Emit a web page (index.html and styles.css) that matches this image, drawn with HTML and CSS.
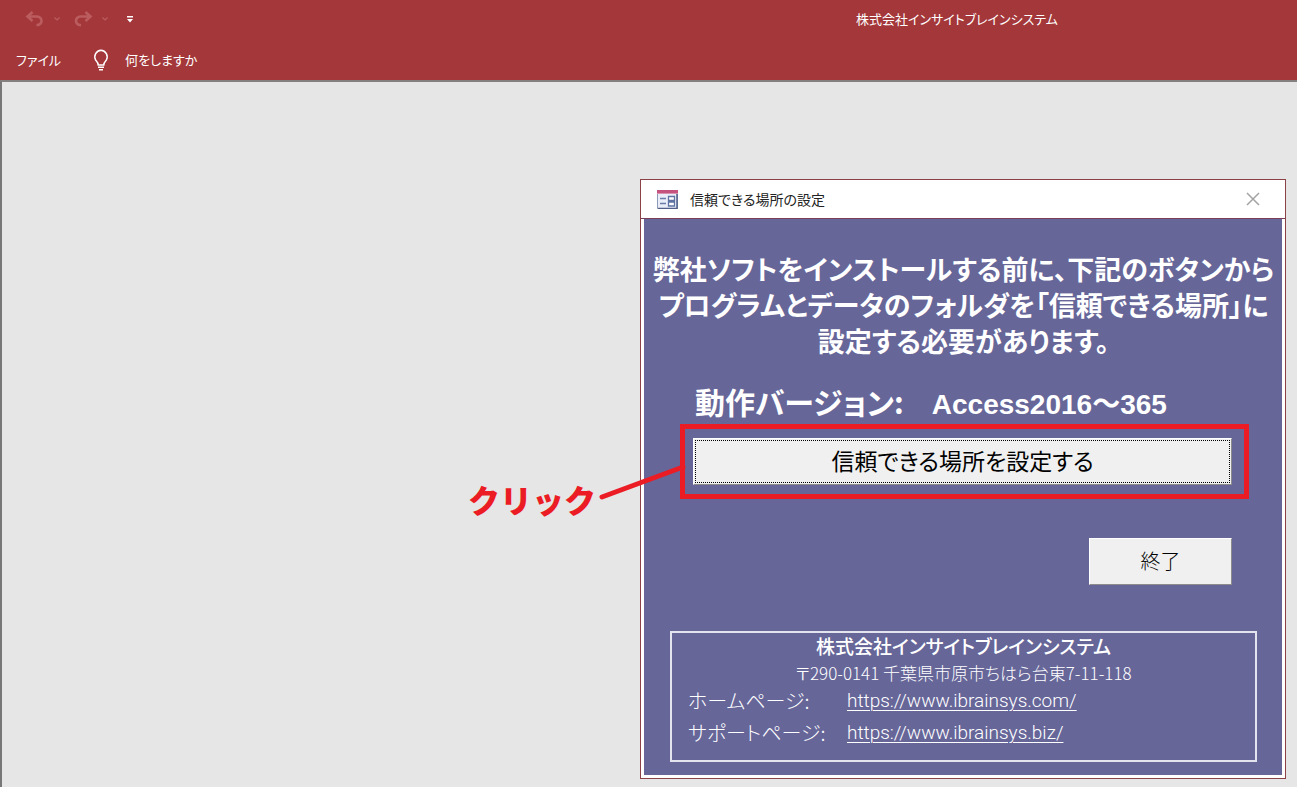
FILE: index.html
```html
<!DOCTYPE html>
<html lang="ja">
<head>
<meta charset="utf-8">
<title>株式会社インサイトブレインシステム</title>
<link rel="stylesheet" href="styles.css">
</head>
<body>
<div class="app">
  <header class="app-header">
    <div class="title-row">
      <div class="quick-access">
        <button class="qat-button faded" aria-label="元に戻す"><svg width="20" height="18" viewBox="0 0 20 18"><path d="M7.500 2 2.500 6.500l5 4.500M3 6.500H12a4.300 4.300 0 0 1 4.500 4.300c0 2.500-2 4.200-5 4.500" fill="none" stroke="currentColor" stroke-width="2.600"/></svg></button>
        <button class="qat-button faded" aria-label="元に戻すの一覧"><svg width="8" height="6" viewBox="0 0 8 6"><path d="M1.500 1.500 4 4l2.500-2.500" fill="none" stroke="currentColor" stroke-width="1.200"/></svg></button>
        <button class="qat-button faded redo" aria-label="やり直し"><svg width="20" height="18" viewBox="0 0 20 18"><path d="M12.500 2 17.500 6.500l-5 4.500M17 6.500H7.500A4.300 4.300 0 0 0 3 10.800c0 2.500 2 4.200 5 4.500" fill="none" stroke="currentColor" stroke-width="2.600"/></svg></button>
        <button class="qat-button faded" aria-label="やり直しの一覧"><svg width="8" height="6" viewBox="0 0 8 6"><path d="M1.500 1.500 4 4l2.500-2.500" fill="none" stroke="currentColor" stroke-width="1.200"/></svg></button>
        <button class="qat-button customize" aria-label="クイック アクセス ツール バーのカスタマイズ"><svg width="6" height="7" viewBox="0 0 6 7"><path d="M0 0h6v1.500H0zM0 3h6L3 6.500z" fill="currentColor"/></svg></button>
      </div>
      <div class="app-title">株式会社インサイトブレインシステム</div>
    </div>
    <nav class="ribbon">
      <button class="ribbon-tab">ファイル</button>
      <button class="ribbon-tab tell-me"><svg width="16" height="22" viewBox="0 0 16 22"><path d="M5.200 16c0-2.500-1.200-3.500-2.600-5A6.700 6.700 0 0 1 8 1.200 6.700 6.700 0 0 1 13.400 11c-1.400 1.500-2.600 2.500-2.600 5zM5 18.300h6M6 20.700h4" fill="none" stroke="currentColor" stroke-width="1.500"/></svg><span>何をしますか</span></button>
    </nav>
  </header>
  <main class="workspace"></main>

  <section class="dialog" role="dialog" aria-labelledby="dialog-title">
    <div class="dialog-bar">
      <svg width="21" height="19" viewBox="0 0 21 19"><path d="M.5.500h20v18H.5z" fill="#e9eef8" stroke="#8d9abb"/><path d="M0 0h21v4H0z" fill="#c4537d"/><path d="M0 3h21v1H0z" fill="#d993b1"/><path d="M3 8.500h6M3 13.500h6" stroke="#6b7da8" stroke-width="1.500"/><path d="M11.500 6.500h6v4h-6zM11.500 12h6v4h-6z" fill="#fff" stroke="#5f73a2" stroke-width="1.300"/><path d="M20 4v14.500H1" fill="none" stroke="#526089" stroke-width="1.500"/></svg>
      <h1 id="dialog-title">信頼できる場所の設定</h1>
      <button class="close" aria-label="閉じる"><svg width="14" height="14" viewBox="0 0 14 14"><path d="m1 1 12 12M13 1 1 13" stroke="#a3a3a3" stroke-width="1.500"/></svg></button>
    </div>
    <div class="form">
      <p class="message">弊社ソフトをインストールする前に、下記のボタンから<br>プログラムとデータのフォルダを「信頼できる場所」に<br>設定する必要があります。</p>
      <p class="version"><span>動作バージョン:</span><span class="release">Access2016～365</span></p>
      <div class="highlight"><button class="command primary"><span>信頼できる場所を設定する</span></button></div>
      <button class="command quit">終了</button>
      <footer class="company">
        <h2>株式会社インサイトブレインシステム</h2>
        <address>〒290-0141 千葉県市原市ちはら台東7-11-118</address>
        <div class="link-row"><span>ホームページ:</span><a href="https://www.ibrainsys.com/">https://www.ibrainsys.com/</a></div>
        <div class="link-row"><span>サポートページ:</span><a href="https://www.ibrainsys.biz/">https://www.ibrainsys.biz/</a></div>
      </footer>
    </div>
    <div class="callout">クリック</div>
    <svg class="pointer" width="90" height="40" viewBox="0 0 90 40"><path d="M5 34 86 4" stroke="#ec1c24" stroke-width="5" stroke-linecap="round"/></svg>
  </section>
</div>
</body>
</html>
```
FILE: styles.css
```css
* { box-sizing: border-box; }

body {
  margin: 0;
  font-family: "Noto Sans CJK JP", sans-serif;
  font-feature-settings: "palt";
  color: #fff;
}

button {
  margin: 0;
  padding: 0;
  border: 0;
  background: none;
  color: inherit;
  font: inherit;
  font-feature-settings: inherit;
}

svg { display: block; }
h1, h2, p { margin: 0; }

.app {
  position: relative;
  display: flex;
  flex-direction: column;
  min-height: 100vh;
  overflow: hidden;
}

.app-header {
  background: #a4373a;
  font-size: 13px;
  line-height: 20px;
}

.title-row {
  display: grid;
  grid-template-columns: 66% auto;
  align-items: center;
  height: 38px;
}

.quick-access {
  display: flex;
  align-items: center;
  padding-left: 25px;
}

.qat-button.faded { color: #bb5c5f; }
.qat-button + .qat-button { margin-left: 8px; }
.qat-button.redo { margin-left: 12px; }
.qat-button.customize { margin-left: 18px; }
.app-title { white-space: nowrap; }

.ribbon {
  display: flex;
  gap: 32px;
  height: 42px;
  padding: 2px 16px 0;
}

.tell-me {
  display: flex;
  align-items: center;
  gap: 16px;
}

.workspace {
  flex: 1;
  border-top: 2px solid #858080;
  border-left: 2px solid #777;
  background: #e6e6e6;
}

.dialog {
  position: absolute;
  top: 179px;
  right: 11px;
  width: 646px;
  padding: 0 3px 3px;
  border: 1px solid #8b4146;
  background: #fff;
}

.dialog-bar {
  display: flex;
  align-items: center;
  height: 39px;
  margin: 0 -3px;
  padding: 0 25px 0 16px;
  border-bottom: 1px solid #7a3e58;
  color: #222;
}

.dialog-bar h1 {
  margin-left: 12px;
  font-size: 14px;
  font-weight: 400;
}

.close { margin-left: auto; }

.form {
  display: flex;
  flex-direction: column;
  padding: 32px 25px 13px 26px;
  background: #666699;
}

.message {
  margin: 0 -26px;
  font-size: 27px;
  font-weight: 700;
  line-height: 36px;
  text-align: center;
  white-space: nowrap;
}

.version {
  display: flex;
  align-items: baseline;
  gap: 28px;
  height: 36px;
  margin: 24px 0 5px 25px;
  font-size: 30px;
  font-weight: 700;
  line-height: 36px;
  white-space: nowrap;
}

.release {
  font-family: "Liberation Sans", "Noto Sans CJK JP", sans-serif;
  font-size: 28px;
}

.highlight {
  margin: 0 8px 0 10px;
  padding: 9px 12px 9px 8px;
  border: 5px solid #ec1c24;
}

.command {
  height: 47px;
  border: 1px solid;
  border-color: #fff #8c8c8c #8c8c8c #fff;
  background: #f0f0f0;
  color: #000;
}

.primary {
  display: block;
  width: 100%;
  padding: 1px;
  font-size: 23px;
}

.primary span {
  display: flex;
  align-items: center;
  justify-content: center;
  height: 100%;
  padding-bottom: 3px;
  border: 1px dotted #000;
}

.quit {
  align-self: flex-end;
  width: 143px;
  margin: 39px 25px 46px 0;
  padding-bottom: 3px;
  font-size: 20px;
  font-weight: 300;
}

.company {
  padding: 0 16px 13px;
  border: 2px solid #e4e4ee;
  font-size: 20px;
  font-weight: 300;
}

.company h2 {
  font-size: 19px;
  font-weight: 500;
  line-height: 26px;
  text-align: center;
}

.company address {
  font-size: 17px;
  font-style: normal;
  line-height: 28px;
  text-align: center;
}

.link-row {
  display: grid;
  grid-template-columns: 159px auto;
  line-height: 28px;
}

.link-row + .link-row { margin-top: 4px; }

.link-row a {
  justify-self: start;
  color: inherit;
  font-family: Roboto, "Noto Sans CJK JP", sans-serif;
  font-size: 19px;
  text-decoration-thickness: 1px;
  text-underline-offset: 3px;
}

.callout {
  position: absolute;
  top: 297px;
  left: -173px;
  color: #ec1c24;
  font-size: 32px;
  font-weight: 900;
  font-feature-settings: normal;
  line-height: 44px;
}

.pointer {
  position: absolute;
  top: 283px;
  left: -44px;
}
```
